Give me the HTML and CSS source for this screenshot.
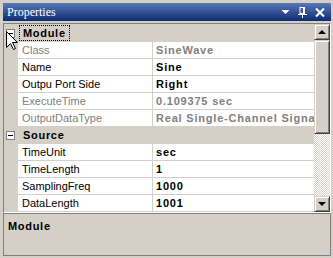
FILE: index.html
```html
<!DOCTYPE html>
<html lang="en">
<head>
  <meta charset="UTF-8">
  <title>Properties</title>
  <link rel="stylesheet" href="styles.css">
</head>
<body>
  <div class="panel">
    <!-- Title bar -->
    <div class="titlebar">
      <span class="title">Properties</span>
      <span class="tools">
        <svg width="9" height="6" viewBox="0 0 9 6"><polygon points="0.5,1 8.5,1 4.5,5" fill="#fff"/></svg>
        <svg width="9" height="11" viewBox="0 0 9 11">
          <rect x="2" y="0.5" width="4" height="6" fill="none" stroke="#fff"/>
          <rect x="5" y="0" width="2" height="7" fill="#fff"/>
          <rect x="0" y="7" width="9" height="1" fill="#fff"/>
          <rect x="4" y="8" width="1" height="3" fill="#fff"/>
        </svg>
        <svg width="10" height="9" viewBox="0 0 10 9"><path d="M1 0.5 L9 8.5 M9 0.5 L1 8.5" stroke="#fff" stroke-width="2"/></svg>
      </span>
    </div>

    <!-- Property grid -->
    <div class="grid">
      <div class="rows">
        <div class="row cat">
          <span class="margin"><span class="expander"></span></span>
          <span class="cat-name focus">Module</span>
        </div>
        <div class="row ro"><span class="margin"></span><span class="name">Class</span><span class="value">SineWave</span></div>
        <div class="row"><span class="margin"></span><span class="name">Name</span><span class="value">Sine</span></div>
        <div class="row"><span class="margin"></span><span class="name">Outpu Port Side</span><span class="value">Right</span></div>
        <div class="row ro"><span class="margin"></span><span class="name">ExecuteTime</span><span class="value">0.109375 sec</span></div>
        <div class="row ro"><span class="margin"></span><span class="name">OutputDataType</span><span class="value">Real Single-Channel Signal of Double</span></div>
        <div class="row cat">
          <span class="margin"><span class="expander"></span></span>
          <span class="cat-name">Source</span>
        </div>
        <div class="row"><span class="margin"></span><span class="name">TimeUnit</span><span class="value">sec</span></div>
        <div class="row"><span class="margin"></span><span class="name">TimeLength</span><span class="value">1</span></div>
        <div class="row"><span class="margin"></span><span class="name">SamplingFreq</span><span class="value">1000</span></div>
        <div class="row"><span class="margin"></span><span class="name">DataLength</span><span class="value">1001</span></div>
      </div>
      <div class="scrollbar">
        <div class="sb-btn"><span class="arrow-up"></span></div>
        <div class="sb-thumb"></div>
        <div class="sb-track"></div>
        <div class="sb-btn"><span class="arrow-down"></span></div>
      </div>
    </div>

    <!-- Help area -->
    <div class="help">
      <span class="help-title">Module</span>
    </div>

    <!-- Mouse pointer -->
    <svg class="cursor" width="13" height="20" viewBox="0 0 13 20">
      <path d="M0.5 0.5 L0.5 16.5 L4.5 12.5 L7.5 18.5 L9.5 17.5 L6.5 11.5 L11.5 11.5 Z" fill="#fff" stroke="#000"/>
    </svg>
  </div>
</body>
</html>
```

FILE: styles.css
```css
/* Basic Styles */
body {
  margin: 0;
  background-color: #d4d0c8;
  font-family: "Liberation Sans", Arial, sans-serif;
  font-size: 11px;
  color: #000;
}

.panel {
  position: relative;
  width: 328px;
  height: 258px;
  padding: 3px 2px 0 3px;
}

/* Title bar */
.titlebar {
  height: 18px;
  display: flex;
  align-items: center;
  justify-content: space-between;
  background: linear-gradient(#5878b8, #0e2a70);
  margin-bottom: 2px;
}

.title {
  font-family: "Liberation Serif", serif;
  font-size: 12px;
  color: #fff;
  padding-left: 4px;
}

.tools {
  display: flex;
  align-items: center;
  gap: 8px;
  padding-right: 6px;
}

/* Property grid */
.grid {
  display: flex;
  border: 1px solid #808080;
  border-right-color: #fff;
  border-bottom-color: #fff;
}

.rows {
  flex: 1;
  background-color: #d4d0c8;
  padding-top: 1px;
}

.row {
  display: grid;
  grid-template-columns: 14px 135px 1fr;
  height: 16px;
  border-bottom: 1px solid #d4d0c8;
  line-height: 16px;
}

.margin {
  background-color: #d4d0c8;
  position: relative;
}

.name {
  background-color: #fff;
  padding-left: 4px;
  border-right: 1px solid #d4d0c8;
  white-space: nowrap;
  overflow: hidden;
}

.value {
  background-color: #fff;
  padding-left: 3px;
  font-weight: bold;
  letter-spacing: 0.8px;
  white-space: nowrap;
  overflow: hidden;
}

.ro .name,
.ro .value {
  color: #808080;
}

/* Category rows */
.cat {
  grid-template-columns: 14px 1fr;
}

.cat-name {
  font-weight: bold;
  letter-spacing: 0.7px;
  padding: 0 3px;
  justify-self: start;
  margin-left: 1px;
  height: 14px;
  line-height: 14px;
  border: 1px solid transparent;
}

.cat-name.focus {
  border: 1px dotted #000;
}

.expander {
  position: absolute;
  left: 2px;
  top: 4px;
  width: 7px;
  height: 7px;
  border: 1px solid #808080;
  background-color: #fff;
}

.expander::after {
  content: "";
  position: absolute;
  left: 1px;
  top: 3px;
  width: 5px;
  height: 1px;
  background-color: #000;
}

/* Scrollbar */
.scrollbar {
  width: 16px;
  display: flex;
  flex-direction: column;
}

.sb-btn,
.sb-thumb {
  background-color: #d4d0c8;
  border: 1px solid;
  border-color: #d4d0c8 #404040 #404040 #d4d0c8;
  box-shadow: inset 1px 1px #fff, inset -1px -1px #808080;
}

.sb-btn {
  height: 14px;
  display: flex;
  align-items: center;
  justify-content: center;
}

.sb-thumb {
  height: 92px;
}

.sb-track {
  flex: 1;
  background: repeating-conic-gradient(#d4d0c8 0 25%, #fff 0 50%) 0 0 / 2px 2px;
}

.arrow-up {
  border-left: 4px solid transparent;
  border-right: 4px solid transparent;
  border-bottom: 4px solid #000;
}

.arrow-down {
  border-left: 4px solid transparent;
  border-right: 4px solid transparent;
  border-top: 4px solid #000;
}

/* Help area */
.help {
  height: 41px;
  border: 1px solid #808080;
  padding: 0 4px;
}

.help-title {
  display: block;
  font-weight: bold;
  letter-spacing: 0.7px;
  margin-top: 6px;
}

/* Mouse pointer */
.cursor {
  position: absolute;
  left: 6px;
  top: 31px;
}
```
